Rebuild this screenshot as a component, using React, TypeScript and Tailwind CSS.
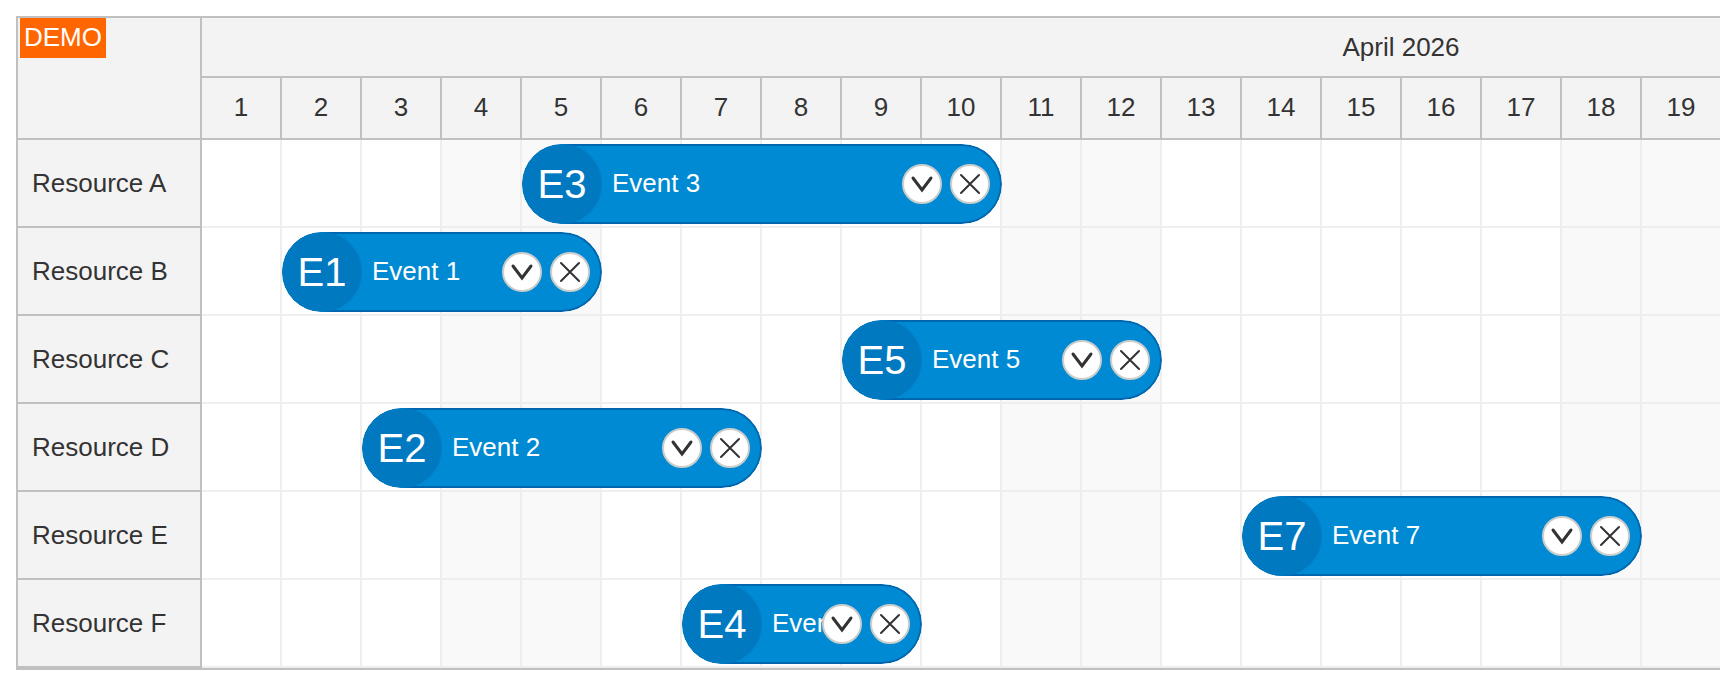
import { Fragment } from "react";

interface SchedulerEvent {
  id: number;
  start: number;
  days: number;
}

interface Resource {
  name: string;
  event: SchedulerEvent;
}

// Days that fit in the viewport; the month header spans all 30
const DAYS = Array.from({ length: 19 }, (_, i) => i + 1);

const RESOURCES: Resource[] = [
  { name: "Resource A", event: { id: 3, start: 5, days: 6 } },
  { name: "Resource B", event: { id: 1, start: 2, days: 4 } },
  { name: "Resource C", event: { id: 5, start: 9, days: 4 } },
  { name: "Resource D", event: { id: 2, start: 3, days: 5 } },
  { name: "Resource E", event: { id: 7, start: 14, days: 5 } },
  { name: "Resource F", event: { id: 4, start: 7, days: 3 } },
];

// April 2026 starts on a Wednesday
const isWeekend = (day: number) => day % 7 === 4 || day % 7 === 5;

function MenuButton() {
  return (
    <button className="size-10 rounded-full border-2 border-[#cccccc] bg-white">
      <svg className="size-9" viewBox="0 0 36 36" fill="none" stroke="#333333" strokeWidth="3" strokeLinecap="round">
        <path d="M9 12 L18 24 L27 12" />
      </svg>
    </button>
  );
}

function DeleteButton() {
  return (
    <button className="size-10 rounded-full border-2 border-[#cccccc] bg-white">
      <svg className="size-9" viewBox="0 0 36 36" fill="none" stroke="#333333" strokeWidth="2" strokeLinecap="round">
        <path d="M9 9 L27 27 M27 9 L9 27" />
      </svg>
    </button>
  );
}

function EventBar({ event }: { event: SchedulerEvent }) {
  return (
    <div
      className="relative row-start-1 mt-1 flex h-20 items-center overflow-hidden rounded-full text-white"
      style={{ gridColumn: `${event.start} / span ${event.days}` }}
    >
      <div className="absolute inset-0 rounded-full border-2 border-[#0066b0] bg-[#008ad3]" />
      <div className="relative flex size-20 shrink-0 items-center justify-center rounded-full bg-[#0079c1] text-[40px] leading-none">
        E{event.id}
      </div>
      <div className="relative ml-2.5 w-0 flex-1 pb-0.5 whitespace-nowrap">Event {event.id}</div>
      <div className="relative mr-3 flex gap-2">
        <MenuButton />
        <DeleteButton />
      </div>
    </div>
  );
}

export default function App() {
  return (
    <div className="h-[686px] w-full overflow-hidden bg-white pt-4 pl-4 font-['Liberation_Sans',Arial,sans-serif] text-[26px] leading-[30px] text-[#333333]">
      <div className="grid w-[2588px] grid-cols-[184px_2400px] border-2 border-[#c0c0c0]">
        <div className="h-[122px] border-r-2 border-b-2 border-[#c0c0c0] bg-[#f3f3f3] pl-0.5">
          <div className="w-fit bg-[#ff6600] px-1 pt-1 pb-1.5 text-white">DEMO</div>
        </div>
        <div className="bg-[#f3f3f3]">
          <div className="flex h-[60px] items-center justify-center border-r-2 border-b-2 border-[#c0c0c0]">
            April 2026
          </div>
          <div className="flex">
            {DAYS.map((day) => (
              <div
                key={day}
                className="flex h-[62px] w-20 items-center justify-center border-r-2 border-b-2 border-[#c0c0c0] pb-0.5"
              >
                {day}
              </div>
            ))}
          </div>
        </div>

        {RESOURCES.map((resource) => (
          <Fragment key={resource.name}>
            <div className="flex h-[88px] items-center border-r-2 border-b-2 border-[#c0c0c0] bg-[#f3f3f3] pl-3.5">
              {resource.name}
            </div>
            <div className="grid grid-cols-[repeat(30,80px)]">
              {DAYS.map((day) => (
                <div
                  key={day}
                  className={`row-start-1 h-[88px] border-r-2 border-b-2 border-[#eeeeee] ${
                    isWeekend(day) ? "bg-[#f9f9f9]" : "bg-white"
                  }`}
                  style={{ gridColumn: day }}
                />
              ))}
              <EventBar event={resource.event} />
            </div>
          </Fragment>
        ))}
      </div>
    </div>
  );
}
